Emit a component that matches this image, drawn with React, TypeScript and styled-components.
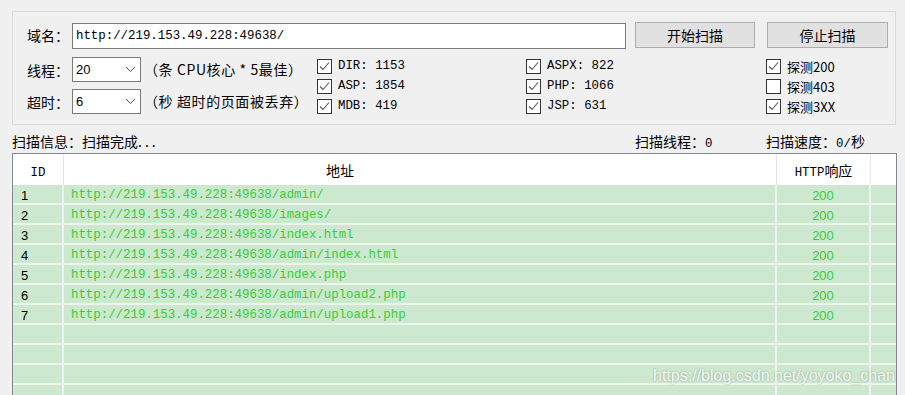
import React from 'react';
import styled, { createGlobalStyle } from 'styled-components';

const colors = {
    window: '#f0f0f0',
    groupLine: '#dcdcdc',
    field: '#7a7a7a',
    button: '#e1e1e1',
    buttonLine: '#adadad',
    tableLine: '#828790',
    rowGreen: '#cce8cf',
    rowLine: '#ecf4ed',
    headLine: '#e5e5e5',
    textGreen: '#3ccb3c',
    text: '#000000',
};

const cjk = `"Noto Sans CJK SC", "Noto Sans", sans-serif`;
const mono = `"Liberation Mono", "Noto Sans CJK SC", monospace`;
const sans = `"Liberation Sans", "Noto Sans CJK SC", sans-serif`;

const GlobalStyle = createGlobalStyle`
    html, body {
        margin: 0;
        padding: 0;
        background: ${colors.window};
    }
    body {
        font-family: ${cjk};
        color: ${colors.text};
    }
`;

const Window = styled.div`
    width: 905px;
    height: 395px;
    overflow: hidden;
    box-sizing: border-box;
    padding: 11px 0 0 12px;
    background: ${colors.window};
`;

const GroupBox = styled.div`
    width: 884px;
    height: 114px;
    box-sizing: border-box;
    border: 1px solid ${colors.groupLine};
    padding: 10px 0 0 14px;
`;

const TopRow = styled.div`
    display: flex;
    align-items: flex-start;
    height: 27px;
`;

const Label = styled.div`
    width: 45px;
    height: 26px;
    font-size: 14px;
    line-height: 26px;
    white-space: nowrap;
`;

const UrlInput = styled.div`
    width: 554px;
    height: 26px;
    margin-top: 1px;
    box-sizing: border-box;
    border: 1px solid ${colors.field};
    background: #fff;
    padding-left: 3px;
    font-family: ${mono};
    font-size: 12.4px;
    line-height: 24px;
`;

const Button = styled.div<{ $gap: number; $width: number }>`
    width: ${p => p.$width}px;
    height: 26px;
    margin-left: ${p => p.$gap}px;
    box-sizing: border-box;
    border: 1px solid ${colors.buttonLine};
    background: ${colors.button};
    font-size: 14px;
    line-height: 24px;
    text-align: center;
`;

const LowerRow = styled.div`
    display: flex;
    margin-top: 8px;
`;

const SettingsBlock = styled.div`
    width: 290px;
    display: flex;
    flex-direction: column;
    gap: 7px;
`;

const SettingRow = styled.div`
    display: flex;
    align-items: center;
    height: 25px;
`;

const SelectBox = styled.div`
    position: relative;
    width: 69px;
    height: 25px;
    box-sizing: border-box;
    border: 1px solid ${colors.field};
    background: #fff;
    padding-left: 3px;
    font-family: ${sans};
    font-size: 13px;
    line-height: 23px;

    svg {
        position: absolute;
        right: 4px;
        top: 8px;
    }
`;

const Hint = styled.div`
    margin-left: 3px;
    font-size: 14px;
    line-height: 25px;
    letter-spacing: 0.6px;
    white-space: nowrap;
`;

const CheckColumn = styled.div<{ $width?: number }>`
    width: ${p => (p.$width ? `${p.$width}px` : 'auto')};
    margin-top: -1px;
    display: flex;
    flex-direction: column;
`;

const CheckItem = styled.div<{ $mono?: boolean }>`
    display: flex;
    align-items: center;
    height: 20px;
    font-family: ${p => (p.$mono ? mono : cjk)};
    font-size: ${p => (p.$mono ? '12.4px' : '13px')};
    white-space: nowrap;
`;

const Box = styled.div`
    width: 15px;
    height: 15px;
    box-sizing: border-box;
    border: 1px solid #333;
    background: #fff;
    margin-right: 6px;
    display: flex;
    align-items: center;
    justify-content: center;
`;

const StatusRow = styled.div`
    display: flex;
    height: 20px;
    margin-top: 8px;
    font-size: 14px;
    line-height: 17px;
    white-space: nowrap;
`;

const StatusCell = styled.div<{ $width?: number }>`
    width: ${p => (p.$width ? `${p.$width}px` : 'auto')};
`;

const Dots = styled.span`
    letter-spacing: 3px;
`;

const Num = styled.span`
    font-family: ${mono};
    font-size: 12.4px;
`;

const TableWrap = styled.div`
    position: relative;
    width: 885px;
    box-sizing: border-box;
    border: 1px solid ${colors.tableLine};
    border-bottom: none;
    height: 260px;
`;

const grid = `51px 713px 94px 1fr`;

const HeadRow = styled.div`
    display: grid;
    grid-template-columns: ${grid};
    height: 31px;
    background: #fff;
`;

const HeadCell = styled.div<{ $pad?: number; $center?: boolean }>`
    border-right: 1px solid ${colors.headLine};
    padding-left: ${p => p.$pad || 0}px;
    text-align: ${p => (p.$center ? 'center' : 'left')};
    font-size: 14px;
    line-height: 33px;
    white-space: nowrap;

    &:last-child {
        border-right: none;
    }
`;

const HeadMono = styled.span`
    font-family: ${mono};
    font-size: 12.4px;
`;

const DataRow = styled.div`
    display: grid;
    grid-template-columns: ${grid};
    height: 20px;
    box-sizing: border-box;
    border-bottom: 2px solid ${colors.rowLine};
    background: ${colors.rowGreen};
`;

const DataCell = styled.div<{ $kind?: 'id' | 'url' | 'code' }>`
    border-right: 2px solid ${colors.rowLine};
    padding-left: ${p => (p.$kind === 'id' ? 8 : p.$kind === 'url' ? 7 : 0)}px;
    padding-top: 1px;
    text-align: ${p => (p.$kind === 'code' ? 'center' : 'left')};
    color: ${p => (p.$kind === 'id' ? colors.text : colors.textGreen)};
    font-family: ${p => (p.$kind === 'url' ? mono : sans)};
    font-size: ${p => (p.$kind === 'url' ? '12.4px' : '13px')};
    line-height: 19px;
    white-space: nowrap;
    overflow: hidden;

    &:last-child {
        border-right: none;
    }
`;

const Watermark = styled.div`
    position: absolute;
    right: 1px;
    top: 213px;
    font-family: ${sans};
    font-size: 16px;
    color: rgba(255, 255, 255, 0.92);
    text-shadow: 0 0 2px rgba(0, 0, 0, 0.35);
    white-space: nowrap;
`;

const Chevron = () => (
    <svg width="11" height="7" viewBox="0 0 11 7">
        <polyline points="1,1 5.5,5.5 10,1" fill="none" stroke="#555" strokeWidth="1" />
    </svg>
);

const Tick = () => (
    <svg width="13" height="13" viewBox="0 0 13 13">
        <polyline points="2,6.5 5,9.5 11,2.5" fill="none" stroke="#555" strokeWidth="1.1" />
    </svg>
);

type CheckProps = { label: string; checked: boolean; mono?: boolean };

const Check: React.FC<CheckProps> = ({ label, checked, mono: isMono }) => (
    <CheckItem $mono={isMono}>
        <Box>{checked && <Tick />}</Box>
        {label}
    </CheckItem>
);

const base = 'http://219.153.49.228:49638/';
const results = ['admin/', 'images/', 'index.html', 'admin/index.html', 'index.php', 'admin/upload2.php', 'admin/upload1.php'];
const totalRows = 11;

const App: React.FC = () => {
    const rows = Array.from({ length: totalRows }, (_, i) => results[i]);

    return (
        <>
            <GlobalStyle />
            <Window>
                <GroupBox>
                    <TopRow>
                        <Label>域名：</Label>
                        <UrlInput>{base}</UrlInput>
                        <Button $gap={9} $width={120}>开始扫描</Button>
                        <Button $gap={12} $width={121}>停止扫描</Button>
                    </TopRow>
                    <LowerRow>
                        <SettingsBlock>
                            <SettingRow>
                                <Label>线程：</Label>
                                <SelectBox>20<Chevron /></SelectBox>
                                <Hint>（条 CPU核心 * 5最佳）</Hint>
                            </SettingRow>
                            <SettingRow>
                                <Label>超时：</Label>
                                <SelectBox>6<Chevron /></SelectBox>
                                <Hint>（秒 超时的页面被丢弃）</Hint>
                            </SettingRow>
                        </SettingsBlock>
                        <CheckColumn $width={209}>
                            <Check mono checked label="DIR: 1153" />
                            <Check mono checked label="ASP: 1854" />
                            <Check mono checked label="MDB: 419" />
                        </CheckColumn>
                        <CheckColumn $width={240}>
                            <Check mono checked label="ASPX: 822" />
                            <Check mono checked label="PHP: 1066" />
                            <Check mono checked label="JSP: 631" />
                        </CheckColumn>
                        <CheckColumn>
                            <Check checked label="探测200" />
                            <Check checked={false} label="探测403" />
                            <Check checked label="探测3XX" />
                        </CheckColumn>
                    </LowerRow>
                </GroupBox>
                <StatusRow>
                    <StatusCell $width={623}>扫描信息：扫描完成<Dots>...</Dots></StatusCell>
                    <StatusCell $width={131}>扫描线程：<Num>0</Num></StatusCell>
                    <StatusCell>扫描速度：<Num>0/</Num>秒</StatusCell>
                </StatusRow>
                <TableWrap>
                    <HeadRow>
                        <HeadCell $center><HeadMono>ID</HeadMono></HeadCell>
                        <HeadCell $pad={262}>地址</HeadCell>
                        <HeadCell $center><HeadMono>HTTP</HeadMono>响应</HeadCell>
                        <HeadCell />
                    </HeadRow>
                    {rows.map((path, i) => (
                        <DataRow key={i}>
                            <DataCell $kind="id">{path ? i + 1 : ''}</DataCell>
                            <DataCell $kind="url">{path ? base + path : ''}</DataCell>
                            <DataCell $kind="code">{path ? '200' : ''}</DataCell>
                            <DataCell />
                        </DataRow>
                    ))}
                    <Watermark>https://blog.csdn.net/yoyoko_chan</Watermark>
                </TableWrap>
            </Window>
        </>
    );
};

export default App;
